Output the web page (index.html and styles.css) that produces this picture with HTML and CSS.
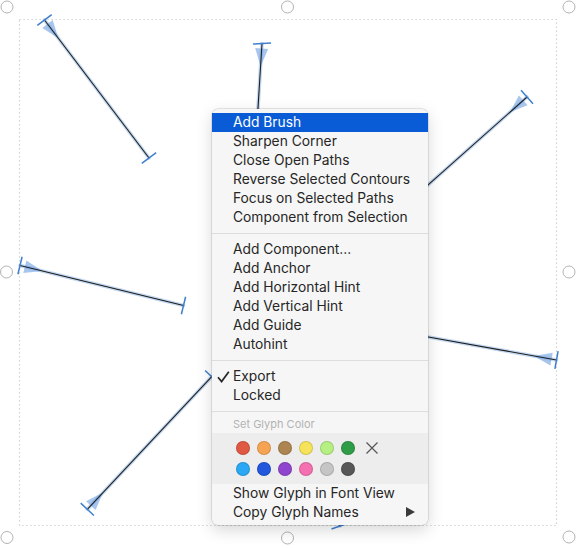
FILE: index.html
```html
<!DOCTYPE html>
<html>
<head>
<meta charset="utf-8">
<link rel="stylesheet" href="styles.css">
</head>
<body>
<div class="stage">
  <svg class="canvas" width="576" height="548" viewBox="0 0 576 548" xmlns="http://www.w3.org/2000/svg">
    <rect class="bounds" x="19.5" y="19.5" width="537" height="506"/>
    <g class="glow">
      <line x1="44.5" y1="20" x2="149" y2="158"/>
      <line x1="262" y1="43.5" x2="256" y2="140"/>
      <line x1="527" y1="97" x2="414.9" y2="196.7"/>
      <line x1="20" y1="265.5" x2="183.5" y2="305.5"/>
      <line x1="556.5" y1="360" x2="418.6" y2="335.3"/>
      <line x1="87.3" y1="509.3" x2="211.7" y2="376.7"/>
      <line x1="340" y1="526" x2="306" y2="432"/>
    </g>
    <g class="arrows">
      <polygon points="42.3,27.9 52.7,20.1 58.39,38.34"/>
      <polygon points="255.2,48.1 268.2,48.9 260.57,66.45"/>
      <polygon points="518.9,95.5 527.6,105.2 509.81,112.28"/>
      <polygon points="23.3,273.0 26.4,260.4 42.34,270.97"/>
      <polygon points="552.7,352.7 550.4,365.5 533.85,355.95"/>
      <polygon points="95.5,510.1 86.0,501.2 103.04,492.52"/>
    </g>
    <g class="path">
      <line x1="44.5" y1="20" x2="149" y2="158"/>
      <line x1="262" y1="43.5" x2="256" y2="140"/>
      <line x1="527" y1="97" x2="414.9" y2="196.7"/>
      <line x1="20" y1="265.5" x2="183.5" y2="305.5"/>
      <line x1="556.5" y1="360" x2="418.6" y2="335.3"/>
      <line x1="87.3" y1="509.3" x2="211.7" y2="376.7"/>
      <line x1="340" y1="526" x2="306" y2="432"/>
    </g>
    <g class="caps">
      <line x1="37.3" y1="25.4" x2="51.7" y2="14.6"/>
      <line x1="141.8" y1="163.4" x2="156.2" y2="152.6"/>
      <line x1="253" y1="44.1" x2="271" y2="42.9"/>
      <line x1="521" y1="90.3" x2="533" y2="103.7"/>
      <line x1="17.9" y1="274.2" x2="22.1" y2="256.8"/>
      <line x1="181.4" y1="314.2" x2="185.6" y2="296.8"/>
      <line x1="558.1" y1="351.1" x2="554.9" y2="368.9"/>
      <line x1="93.9" y1="515.5" x2="80.7" y2="503.1"/>
      <line x1="218.3" y1="382.9" x2="205.1" y2="370.5"/>
      <line x1="348.5" y1="523" x2="331.5" y2="529"/>
    </g>
    <g class="handles">
      <circle cx="7" cy="7" r="6"/>
      <circle cx="287.5" cy="7" r="6"/>
      <circle cx="569" cy="7" r="6"/>
      <circle cx="6.5" cy="272" r="6"/>
      <circle cx="569" cy="272" r="6"/>
      <circle cx="7" cy="537.5" r="6"/>
      <circle cx="287.5" cy="538" r="6"/>
      <circle cx="569" cy="537" r="6"/>
    </g>
  </svg>

  <div class="menu">
    <div class="item active">Add Brush</div>
    <div class="item">Sharpen Corner</div>
    <div class="item">Close Open Paths</div>
    <div class="item">Reverse Selected Contours</div>
    <div class="item">Focus on Selected Paths</div>
    <div class="item">Component from Selection</div>
    <div class="sep"></div>
    <div class="item">Add Component…</div>
    <div class="item">Add Anchor</div>
    <div class="item">Add Horizontal Hint</div>
    <div class="item">Add Vertical Hint</div>
    <div class="item">Add Guide</div>
    <div class="item">Autohint</div>
    <div class="sep"></div>
    <div class="item"><svg class="check" width="13" height="12" viewBox="0 0 13 12"><path d="M1 6.2 L4.6 10.6 L11.8 0.8"/></svg>Export</div>
    <div class="item">Locked</div>
    <div class="sep tight"></div>
    <div class="header">Set Glyph Color</div>
    <div class="colors">
      <div class="swatch-row">
        <span class="dot red"></span>
        <span class="dot orange"></span>
        <span class="dot brown"></span>
        <span class="dot yellow"></span>
        <span class="dot lightgreen"></span>
        <span class="dot green"></span>
        <svg class="clear" width="14" height="14" viewBox="0 0 14 14"><path d="M1.5 1.5 L12.5 12.5 M12.5 1.5 L1.5 12.5"/></svg>
      </div>
      <div class="swatch-row">
        <span class="dot lightblue"></span>
        <span class="dot blue"></span>
        <span class="dot purple"></span>
        <span class="dot pink"></span>
        <span class="dot lightgray"></span>
        <span class="dot darkgray"></span>
      </div>
    </div>
    <div class="item">Show Glyph in Font View</div>
    <div class="item sub">Copy Glyph Names<span class="arrow"></span></div>
  </div>
</div>
</body>
</html>
```
FILE: styles.css
```css
html, body {
  margin: 0;
  padding: 0;
  background: #ffffff;
}
.stage {
  position: relative;
  width: 576px;
  height: 548px;
  overflow: hidden;
  font-family: Inter, "Noto Sans", sans-serif;
}
.canvas {
  display: block;
}
.bounds {
  fill: none;
  stroke: #c9c9c9;
  stroke-width: 1.2;
  stroke-dasharray: 1.2 2.8;
}
.glow line {
  stroke: rgba(110, 160, 220, 0.42);
  stroke-width: 3.6;
  stroke-linecap: round;
}
.arrows polygon {
  fill: rgba(110, 160, 225, 0.6);
}
.path line {
  stroke: #1e1e1e;
  stroke-width: 1.1;
}
.caps line {
  stroke: #3f7fd0;
  stroke-width: 1.5;
}
.handles circle {
  fill: #ffffff;
  stroke: #b3b3b3;
  stroke-width: 1;
}
.menu {
  position: absolute;
  left: 212px;
  top: 109px;
  width: 216px;
  box-sizing: border-box;
  padding: 4px 0 3px;
  background: #f6f6f6;
  border-radius: 6px;
  box-shadow: 0 0 0 0.5px rgba(0, 0, 0, 0.18), 0 5px 16px rgba(0, 0, 0, 0.16);
  display: flex;
  flex-direction: column;
}
.menu > * {
  flex-shrink: 0;
}
.item {
  position: relative;
  height: 19px;
  line-height: 19px;
  padding-left: 21px;
  font-size: 13.8px;
  color: #262626;
  white-space: nowrap;
}
.item.active {
  background: #0a5cd6;
  color: #ffffff;
}
.check {
  position: absolute;
  left: 5px;
  top: 4px;
}
.check path {
  fill: none;
  stroke: #262626;
  stroke-width: 1.7;
}
.sep {
  height: 1px;
  margin: 6px 0;
  background: #dddddd;
}
.sep.tight {
  margin-bottom: 0;
}
.header {
  height: 21px;
  line-height: 25px;
  padding-left: 21px;
  font-size: 11px;
  color: #b3b3b3;
}
.colors {
  background: #ededed;
  padding: 8px 0 8px 24px;
  display: flex;
  flex-direction: column;
  gap: 7px;
}
.swatch-row {
  display: flex;
  gap: 7px;
  align-items: center;
  height: 14px;
}
.dot {
  width: 14px;
  height: 14px;
  border-radius: 50%;
  box-sizing: border-box;
  box-shadow: inset 0 0 0 1px rgba(0, 0, 0, 0.14);
}
.red { background: #e05a43; }
.orange { background: #f6a453; }
.brown { background: #ad8551; }
.yellow { background: #f5e35a; }
.lightgreen { background: #b6ef82; }
.green { background: #2f9d47; }
.lightblue { background: #2aa8f4; }
.blue { background: #2257dd; }
.purple { background: #8f45cd; }
.pink { background: #f470b1; }
.lightgray { background: #c5c5c5; }
.darkgray { background: #575757; }
.clear {
  margin-left: 3px;
}
.clear path {
  stroke: #555555;
  stroke-width: 1.2;
  fill: none;
}
.arrow {
  position: absolute;
  right: 13px;
  top: 4px;
  width: 0;
  height: 0;
  border-top: 5.5px solid transparent;
  border-bottom: 5.5px solid transparent;
  border-left: 9px solid #3a3a3a;
}
```
